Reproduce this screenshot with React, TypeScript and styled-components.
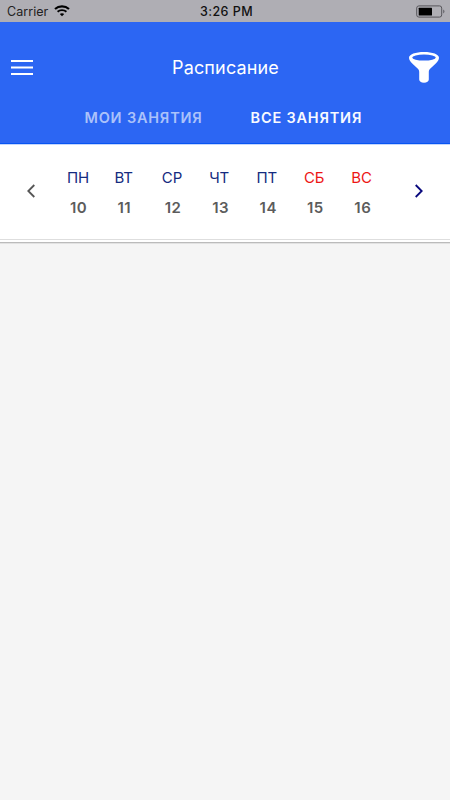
import React from "react";
import styled, { createGlobalStyle } from "styled-components";

const GlobalStyle = createGlobalStyle`
  * { box-sizing: border-box; }
  body { margin: 0; background: #f5f5f5; font-family: Inter, "Liberation Sans", sans-serif; }
  button { font: inherit; color: inherit; background: none; border: 0; padding: 0; }
`;

const Screen = styled.div`
  width: 450px;
  height: 800px;
  overflow: hidden;
  background: #f5f5f5;
`;

const StatusBar = styled.div`
  display: grid;
  grid-template-columns: 1fr auto 1fr;
  align-items: center;
  height: 22px;
  padding: 0 5px 0 7px;
  background: #afaeb4;
  color: #111;
`;

const Carrier = styled.div`
  display: flex;
  align-items: center;
  gap: 6px;
  font-size: 12.5px;
  line-height: 22px;
  letter-spacing: 0.05px;
  color: #222;
  svg { margin-top: -1px; }
`;

const Clock = styled.time`
  padding: 1px 0 0 1px;
  font-size: 12.5px;
  font-weight: 500;
  letter-spacing: 0.45px;
  line-height: 22px;
`;

const BatterySlot = styled.div`
  display: flex;
  justify-content: flex-end;
`;

const Header = styled.header`
  height: 122px;
  background: #2c66f3;
  border-bottom: 1px solid #0755f2;
  color: #fff;
`;

const NavRow = styled.div`
  display: grid;
  grid-template-columns: 34px 1fr 34px;
  align-items: center;
  height: 70px;
  padding: 22px 8px 0 10px;
`;

const IconButton = styled.button`
  display: flex;
  align-items: center;
`;

const Title = styled.h1`
  margin: 0;
  padding-right: 1px;
  text-align: center;
  font-size: 18px;
  font-weight: 400;
  line-height: 24px;
  letter-spacing: 0.15px;
`;

const Tabs = styled.nav`
  display: flex;
  gap: 48px;
  padding: 15px 0 0 84.5px;
`;

const Tab = styled.button<{ $active?: boolean }>`
  font-size: 14.5px;
  font-weight: 600;
  line-height: 22px;
  letter-spacing: 0.8px;
  white-space: nowrap;
  color: ${(p) => (p.$active ? "#f8faff" : "#abc2fa")};
`;

const Week = styled.section`
  display: flex;
  height: 98px;
  padding: 22px 0 0 26px;
  background: #fff;
  border-top: 1px solid #c5d6fc;
  box-shadow: inset 0 -2px 0 #fff, inset 0 -3px 0 #dedede, 0 1px 0 #bbb, 0 2px 0 #e2e2e2;
`;

const Arrow = styled.button<{ $color: string }>`
  display: flex;
  width: 10px;
  height: 48px;
  align-items: center;
  color: ${(p) => p.$color};
`;

const Days = styled.div`
  display: grid;
  grid-template-columns: repeat(7, 47.4px);
  width: 346.5px;
  margin-left: 31px;
`;

const Day = styled.div<{ $weekend?: boolean }>`
  font-size: 15px;
  line-height: 22px;
  letter-spacing: -0.1px;
  color: ${(p) => (p.$weekend ? "#ed1515" : "#142b80")};
`;

const DateNumber = styled.div`
  margin-top: 8px;
  padding-left: 3px;
  font-weight: 600;
  font-size: 15px;
  line-height: 22px;
  letter-spacing: 0.5px;
  color: #5c5c5c;
`;

const week = [
  ["ПН", 10], ["ВТ", 11], ["СР", 12], ["ЧТ", 13], ["ПТ", 14], ["СБ", 15], ["ВС", 16],
] as const;

const WifiIcon = () => (
  <svg width="16" height="12" viewBox="0 0 16 12" fill="none" stroke="#000">
    <path d="M1 4.1C4.9.5 11.1.5 15 4.1" strokeWidth="2.1" />
    <path d="M3.6 6.8c2.5-2.3 6.3-2.3 8.8 0" strokeWidth="1.9" />
    <path d="M8 11.3 5.8 9c1.2-1.1 3.2-1.1 4.4 0Z" fill="#000" stroke="none" />
  </svg>
);

const BatteryIcon = () => (
  <svg width="29" height="13" viewBox="0 0 29 13">
    <rect x=".7" y=".9" width="25" height="11.2" rx="2.2" fill="none" stroke="#56555a" />
    <rect x="2.7" y="2.7" width="13.3" height="7.8" rx=".5" fill="#000" />
    <path d="M27.3 4.6c1.5.6 1.5 3.2 0 3.8Z" fill="#56555a" />
  </svg>
);

const MenuIcon = () => (
  <svg width="24" height="18" viewBox="0 0 24 18" stroke="#fff" strokeWidth="2">
    <path d="M1 2h22M1 8.5h22M1 15h22" />
  </svg>
);

const FunnelIcon = () => (
  <svg width="32" height="32" viewBox="0 0 32 32">
    <path
      d="M16 .1C24.5.1 31 2.5 31 5.7c0 2.2-1.4 4.1-3.5 6.1l-5.1 4.8c-1 1-1.6 2-1.6 3.5v7.4c0 2-1.9 3.2-4.8 3.2s-4.8-1.2-4.8-3.2v-7.4c0-1.5-.6-2.5-1.6-3.5l-5.1-4.8C2.4 9.8 1 7.9 1 5.7 1 2.5 7.5.1 16 .1Z"
      fill="#fff"
    />
    <ellipse cx="16" cy="5.6" rx="11.8" ry="3" fill="#2c66f3" />
  </svg>
);

const Chevron = ({ next = false }: { next?: boolean }) => (
  <svg width="10" height="14" viewBox="0 0 10 14" fill="none" stroke="currentColor" strokeWidth="1.8">
    <path d={next ? "m1.7 1 6 6-6 6" : "m8.3 1-6 6 6 6"} />
  </svg>
);

export default function App() {
  return (
    <Screen>
      <GlobalStyle />
      <StatusBar>
        <Carrier>Carrier<WifiIcon /></Carrier>
        <Clock>3:26 PM</Clock>
        <BatterySlot><BatteryIcon /></BatterySlot>
      </StatusBar>
      <Header>
        <NavRow>
          <IconButton aria-label="Меню"><MenuIcon /></IconButton>
          <Title>Расписание</Title>
          <IconButton aria-label="Фильтр"><FunnelIcon /></IconButton>
        </NavRow>
        <Tabs>
          <Tab>МОИ ЗАНЯТИЯ</Tab>
          <Tab $active>ВСЕ ЗАНЯТИЯ</Tab>
        </Tabs>
      </Header>
      <Week>
        <Arrow $color="#555" aria-label="Предыдущая неделя"><Chevron /></Arrow>
        <Days>
          {week.map(([name, date], i) => (
            <Day key={date} $weekend={i > 4}>
              {name}
              <DateNumber>{date}</DateNumber>
            </Day>
          ))}
        </Days>
        <Arrow $color="#08087d" aria-label="Следующая неделя"><Chevron next /></Arrow>
      </Week>
    </Screen>
  );
}
